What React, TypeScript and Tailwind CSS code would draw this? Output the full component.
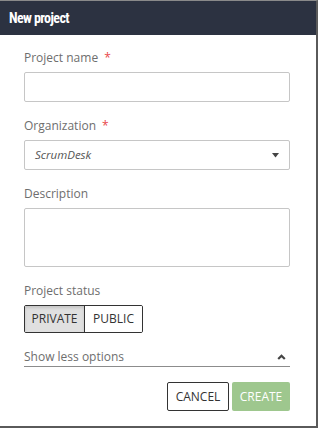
import React from 'react';

const Label: React.FC<{ text: string; required?: boolean }> = ({ text, required }) => (
  <div className="h-[18px] leading-[18px] text-[12px] text-[#6e6e6e] mb-[5px]">
    {text}
    {required && <span className="text-[#e8474a] ml-[6px]">*</span>}
  </div>
);

const App: React.FC = () => {
  return (
    <div
      className="w-[318px] h-[428px] bg-white border-t border-t-[#8a8a8a] border-r-[2px] border-r-[#5a5a5a] border-b-[2px] border-b-[#5a5a5a] flex flex-col"
      style={{ fontFamily: '"Open Sans", "Liberation Sans", sans-serif' }}
    >
      {/* Header */}
      <div className="h-[34px] bg-[#2c3241] flex items-center pl-[9px]">
        <span
          className="text-white text-[14px] font-bold tracking-[-0.6px]"
          style={{ fontFamily: '"Roboto Condensed", "Liberation Sans Narrow", Roboto, sans-serif' }}
        >
          New project
        </span>
      </div>

      {/* Form */}
      <div className="pl-6 pr-[26px] pt-[14px] flex flex-col">
        <Label text="Project name" required />
        <div className="h-[30px] border border-[#c6c6c6] rounded-[2px]" />

        <div className="mt-[15px]">
          <Label text="Organization" required />
        </div>
        <div className="h-[30px] border border-[#c6c6c6] rounded-[2px] flex items-center justify-between pl-[10px] pr-[10px]">
          <span className="italic text-[11.5px] text-[#555]">ScrumDesk</span>
          <svg width="7" height="5" viewBox="0 0 7 5">
            <path d="M0 0 L7 0 L3.5 4.5 Z" fill="#444" />
          </svg>
        </div>

        <div className="mt-[15px]">
          <Label text="Description" />
        </div>
        <div className="h-[59px] border border-[#c6c6c6] rounded-[2px]" />

        <div className="mt-[15px]">
          <Label text="Project status" />
        </div>
        <div className="flex">
          <div className="h-[28px] flex border border-[#333] rounded-[2px] overflow-hidden text-[12px] text-[#333]">
            <div className="w-[60px] bg-[#e0e0e0] shadow-[inset_0_2px_3px_rgba(0,0,0,0.12)] flex items-center justify-center border-r border-[#333]">
              PRIVATE
            </div>
            <div className="w-[57px] bg-white flex items-center justify-center">PUBLIC</div>
          </div>
        </div>

        <div className="mt-[15px] h-[19px] border-b border-[#8c8c8c] flex items-start justify-between pr-[4px]">
          <span className="leading-[18px] text-[12px] text-[#6e6e6e]">Show less options</span>
          <svg width="9" height="6" viewBox="0 0 9 6" className="mt-[6px]">
            <path d="M1.2 5 L4.5 1.7 L7.8 5" fill="none" stroke="#444" strokeWidth="2.2" />
          </svg>
        </div>

        <div className="mt-[15px] flex justify-end gap-[3px]">
          <button className="w-[62px] h-[29px] border border-[#333] rounded-[2px] bg-white text-[12px] text-[#333]">
            CANCEL
          </button>
          <button className="w-[58px] h-[29px] rounded-[2px] bg-[#9ec78e] text-[12px] text-white">
            CREATE
          </button>
        </div>
      </div>
    </div>
  );
};

export default App;
